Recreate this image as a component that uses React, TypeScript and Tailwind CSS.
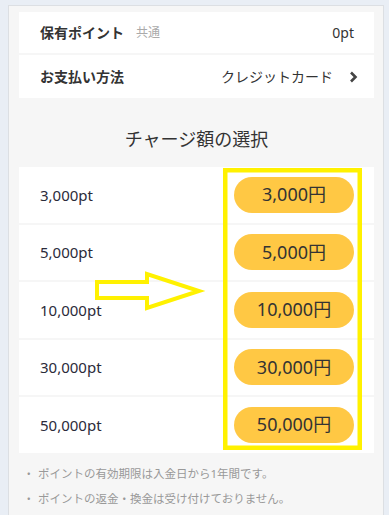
import React from 'react';

const font = { fontFamily: '"Noto Sans", "Noto Sans CJK JP", sans-serif' };

const charges: { pt: string; yen: string }[] = [
  { pt: '3,000pt', yen: '3,000円' },
  { pt: '5,000pt', yen: '5,000円' },
  { pt: '10,000pt', yen: '10,000円' },
  { pt: '30,000pt', yen: '30,000円' },
  { pt: '50,000pt', yen: '50,000円' },
];

const notes = ['ポイントの有効期限は入金日から1年間です。', 'ポイントの返金・換金は受け付けておりません。'];

const App: React.FC = () => {
  return (
    <div className="relative w-[389px] h-[515px] overflow-hidden bg-[#e9eef5] pt-[5px] pl-[8px] pr-[5px]" style={font}>
      <div className="h-full border border-b-0 border-[#dcdfe3] bg-[#f6f6f6] pl-[10px] pr-[9px] pt-[6px]">
        <div className="flex flex-col gap-[2px]">
          <div className="h-[41px] bg-white flex items-center pl-[21px] pr-[20px]">
            <span className="text-[14px] font-bold text-[#333]">保有ポイント</span>
            <span className="ml-[12px] text-[12px] text-[#aaa]">共通</span>
            <span className="ml-auto text-[14px] text-[#333]">0pt</span>
          </div>
          <div className="h-[43px] bg-white flex items-center pl-[21px] pr-[16px]">
            <span className="text-[14px] font-bold text-[#333]">お支払い方法</span>
            <span className="ml-auto text-[14px] text-[#333]">クレジットカード</span>
            <svg className="ml-[16px]" width="9" height="12" viewBox="0 0 9 12">
              <path d="M2 1.5 L6.5 6 L2 10.5" fill="none" stroke="#444" strokeWidth="2.6" />
            </svg>
          </div>
        </div>

        <div className="h-[69px] pt-[13px] flex items-center justify-center">
          <h2 className="text-[18px] text-[#333]">チャージ額の選択</h2>
        </div>

        <div className="flex flex-col gap-[2px]">
          {charges.map((c) => (
            <div key={c.pt} className="h-[55.5px] bg-white flex items-center justify-between pl-[21px] pr-[20px]">
              <span className="text-[15px] text-[#2b2b3a]">{c.pt}</span>
              <button className="w-[120px] h-[36px] rounded-full bg-[#ffc844] text-[18px] text-[#333] flex items-center justify-center">
                {c.yen}
              </button>
            </div>
          ))}
        </div>

        <ul className="pt-[12px] flex flex-col gap-[7px]">
          {notes.map((n) => (
            <li key={n} className="flex items-center h-[18px] text-[11.5px] text-[#999]">
              <span className="w-[19px] pl-[4px]">・</span>
              <span>{n}</span>
            </li>
          ))}
        </ul>
      </div>

      <svg className="absolute inset-0 pointer-events-none" width="389" height="515" viewBox="0 0 389 515">
        <rect x="225.25" y="170.25" width="134.5" height="277.5" fill="none" stroke="#fff100" strokeWidth="4.5" />
        <polygon
          points="97,282 147,282 147,274 199,291 147,308 147,298 97,298"
          fill="none"
          stroke="#fff100"
          strokeWidth="4"
        />
      </svg>
    </div>
  );
};

export default App;
